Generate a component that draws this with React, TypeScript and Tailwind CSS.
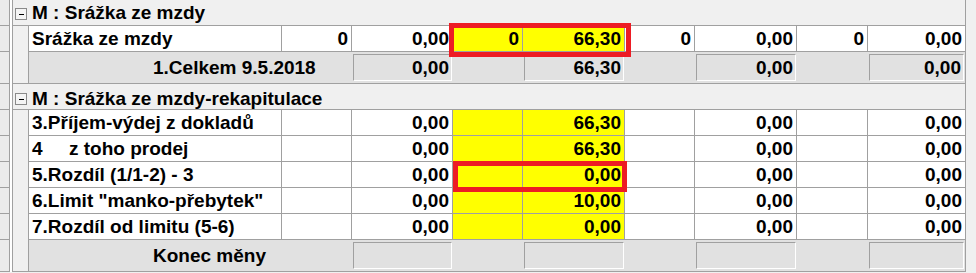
const line = 'border-[#a0a0a0]'

const colW = [
  'w-[70px]',
  'w-[101px]',
  'w-[70px]',
  'w-[102px]',
  'w-[70px]',
  'w-[102px]',
  'w-[71px]',
  'w-[97px]',
]

type Row =
  | { kind: 'header'; title: string; top: string; box: string }
  | { kind: 'data'; label: string; vals: string[] }
  | { kind: 'total'; label: string; vals: string[] }

const rows: Row[] = [
  { kind: 'header', title: 'M : Srážka ze mzdy', top: 'pt-[2px]', box: 'mt-[6px]' },
  { kind: 'data', label: 'Srážka ze mzdy', vals: ['0', '0,00', '0', '66,30', '0', '0,00', '0', '0,00'] },
  { kind: 'total', label: '1.Celkem 9.5.2018', vals: ['0,00', '66,30', '0,00', '0,00'] },
  { kind: 'header', title: 'M : Srážka ze mzdy-rekapitulace', top: 'pt-[4px]', box: 'mt-[5px]' },
  { kind: 'data', label: '3.Příjem-výdej z dokladů', vals: ['', '0,00', '', '66,30', '', '0,00', '', '0,00'] },
  { kind: 'data', label: '4     z toho prodej', vals: ['', '0,00', '', '66,30', '', '0,00', '', '0,00'] },
  { kind: 'data', label: '5.Rozdíl (1/1-2) - 3', vals: ['', '0,00', '', '0,00', '', '0,00', '', '0,00'] },
  { kind: 'data', label: '6.Limit "manko-přebytek"', vals: ['', '0,00', '', '10,00', '', '0,00', '', '0,00'] },
  { kind: 'data', label: '7.Rozdíl od limitu (5-6)', vals: ['', '0,00', '', '0,00', '', '0,00', '', '0,00'] },
  { kind: 'total', label: 'Konec měny', vals: ['', '', '', ''] },
]

function Gutter({ h }: { h: string }) {
  return (
    <>
      <div className={`${h} w-[10px] shrink-0 bg-[#ebebeb] border-r border-b ${line}`} />
      <div className={`${h} w-[2px] shrink-0 bg-white`} />
    </>
  )
}

function HeaderRow({ title, top, box }: { title: string; top: string; box: string }) {
  return (
    <div className="flex h-[26px]">
      <Gutter h="h-[26px]" />
      <div className={`flex items-start w-[954px] shrink-0 bg-[#f0f0f0] border-l border-r border-b ${line} pl-[2px] ${top}`}>
        {/* collapse box */}
        <div className={`${box} w-[12px] h-[12px] shrink-0 border border-[#8a8a8a] bg-[#f4f4f4] flex items-center justify-center`}>
          <div className="w-[5px] h-[1px] bg-black" />
        </div>
        <span className="ml-[5px] leading-[21px]">{title}</span>
      </div>
    </div>
  )
}

function DataRow({ label, vals }: { label: string; vals: string[] }) {
  return (
    <div className="flex h-[26px]">
      <Gutter h="h-[26px]" />
      <div className={`flex w-[954px] shrink-0 border-l border-r ${line}`}>
        <div className={`w-[16px] shrink-0 bg-[#f0f0f0] border-r ${line}`} />
        <div className={`w-[253px] shrink-0 bg-white border-r border-b ${line} pl-[3px] leading-[25px] whitespace-pre`}>
          {label}
        </div>
        {vals.map((v, i) => (
          <div
            key={i}
            className={`${colW[i]} shrink-0 border-b ${line} ${i < 7 ? 'border-r' : ''} ${
              i === 2 || i === 3 ? 'bg-[#ffff00]' : 'bg-white'
            } pr-[3px] text-right leading-[25px]`}
          >
            {v}
          </div>
        ))}
      </div>
    </div>
  )
}

function TotalRow({ label, vals }: { label: string; vals: string[] }) {
  return (
    <div className="flex h-[32px]">
      <Gutter h="h-[32px]" />
      <div className={`flex w-[954px] shrink-0 border-l border-r border-b ${line}`}>
        <div className={`w-[16px] shrink-0 bg-[#f0f0f0] border-r ${line}`} />
        <div className="flex flex-1 bg-[#e1e1e1]">
          <div className="w-[323px] shrink-0 pl-[124px] leading-[31px] whitespace-pre">{label}</div>
          {vals.map((v, i) => (
            <div key={i} className="flex">
              <div className={`${colW[i * 2 + 1]} shrink-0 pt-[2px] pb-[2px] px-[1px]`}>
                <div className="h-full border-t border-l border-[#a0a0a0] border-b-white border-r-white border-b border-r pr-[2px] text-right leading-[25px]">
                  {v}
                </div>
              </div>
              {i < 3 && <div className={`${colW[i * 2 + 2]} shrink-0`} />}
            </div>
          ))}
        </div>
      </div>
    </div>
  )
}

export default function App() {
  return (
    <div className="relative w-[976px] h-[273px] overflow-hidden bg-[#f0f0f0] text-black text-[19px] font-bold font-['Liberation_Sans',Arial,sans-serif]">
      {rows.map((r, i) =>
        r.kind === 'header' ? (
          <HeaderRow key={i} title={r.title} top={r.top} box={r.box} />
        ) : r.kind === 'data' ? (
          <DataRow key={i} label={r.label} vals={r.vals} />
        ) : (
          <TotalRow key={i} label={r.label} vals={r.vals} />
        )
      )}

      {/* red highlight frames */}
      <div className="absolute left-[449px] top-[23px] w-[182px] h-[34px] border-[5px] border-[#ed1c24]" />
      <div className="absolute left-[453px] top-[161px] w-[174px] h-[31px] border-[5px] border-[#ed1c24]" />
    </div>
  )
}
